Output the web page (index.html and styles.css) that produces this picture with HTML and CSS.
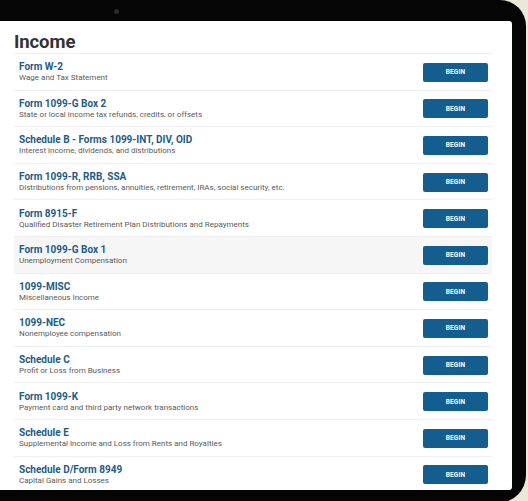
FILE: index.html
```html
<!DOCTYPE html>
<html>
<head>
<meta charset="utf-8">
<link rel="stylesheet" href="styles.css">
</head>
<body>
<div class="tablet">
  <div class="bezel-top"><span class="camera"></span></div>
  <div class="screen">
    <h1 class="heading">Income</h1>
    <ul class="list">
      <li class="row"><div class="text"><div class="title">Form W-2</div><div class="sub">Wage and Tax Statement</div></div><button class="begin">BEGIN</button></li>
      <li class="row"><div class="text"><div class="title">Form 1099-G Box 2</div><div class="sub">State or local income tax refunds, credits, or offsets</div></div><button class="begin">BEGIN</button></li>
      <li class="row"><div class="text"><div class="title">Schedule B - Forms 1099-INT, DIV, OID</div><div class="sub">Interest income, dividends, and distributions</div></div><button class="begin">BEGIN</button></li>
      <li class="row"><div class="text"><div class="title">Form 1099-R, RRB, SSA</div><div class="sub">Distributions from pensions, annuities, retirement, IRAs, social security, etc.</div></div><button class="begin">BEGIN</button></li>
      <li class="row"><div class="text"><div class="title">Form 8915-F</div><div class="sub">Qualified Disaster Retirement Plan Distributions and Repayments</div></div><button class="begin">BEGIN</button></li>
      <li class="row row-hover"><div class="text"><div class="title">Form 1099-G Box 1</div><div class="sub">Unemployment Compensation</div></div><button class="begin">BEGIN</button></li>
      <li class="row"><div class="text"><div class="title">1099-MISC</div><div class="sub">Miscellaneous Income</div></div><button class="begin">BEGIN</button></li>
      <li class="row"><div class="text"><div class="title">1099-NEC</div><div class="sub">Nonemployee compensation</div></div><button class="begin">BEGIN</button></li>
      <li class="row"><div class="text"><div class="title">Schedule C</div><div class="sub">Profit or Loss from Business</div></div><button class="begin">BEGIN</button></li>
      <li class="row"><div class="text"><div class="title">Form 1099-K</div><div class="sub">Payment card and third party network transactions</div></div><button class="begin">BEGIN</button></li>
      <li class="row"><div class="text"><div class="title">Schedule E</div><div class="sub">Supplemental Income and Loss from Rents and Royalties</div></div><button class="begin">BEGIN</button></li>
      <li class="row"><div class="text"><div class="title">Schedule D/Form 8949</div><div class="sub">Capital Gains and Losses</div></div><button class="begin">BEGIN</button></li>
    </ul>
  </div>
</div>
</body>
</html>
```

FILE: styles.css
```css
* { box-sizing: border-box; }
html, body { margin: 0; padding: 0; }
body {
  width: 528px;
  height: 501px;
  overflow: hidden;
  background: #ebe8d6;
  font-family: Roboto, "Liberation Sans", sans-serif;
}
.tablet {
  width: 546px;
  height: 503px;
  margin-left: -20px;
  background: #050505;
  border-radius: 0 26px 28px 0;
  padding: 0 14px 13px 20px;
  display: flex;
  flex-direction: column;
}
.bezel-top {
  height: 21px;
  flex: none;
  position: relative;
}
.camera {
  position: absolute;
  left: 114px;
  top: 9px;
  width: 5px;
  height: 5px;
  border-radius: 50%;
  background: #2a2a2a;
}
.screen {
  flex: 1;
  background: #fff;
  border-radius: 0 3px 3px 0;
  padding: 10px 20px 0 14px;
  overflow: hidden;
}
.heading {
  margin: 0;
  height: 22px;
  font-size: 18.5px;
  font-weight: 700;
  color: #333;
  line-height: 22px;
  letter-spacing: -0.1px;
}
.list {
  list-style: none;
  margin: 0;
  padding: 0;
}
.row {
  height: 36.6px;
  border-top: 1px solid #eeeeee;
  display: flex;
  align-items: center;
  justify-content: space-between;
  padding: 0 4px 0 5px;
}
.row-hover { background: #f6f6f6; }
.text { display: flex; flex-direction: column; padding-top: 1px; }
.title {
  font-size: 10px;
  font-weight: 700;
  color: #1d5b88;
  line-height: 12px;
}
.sub {
  font-size: 8px;
  color: #5a5a5a;
  line-height: 10px;
}
.begin {
  width: 65px;
  height: 19px;
  border: none;
  border-radius: 2px;
  background: #135d8f;
  color: #fff;
  font-family: Roboto, "Liberation Sans", sans-serif;
  font-size: 6.5px;
  font-weight: 700;
  letter-spacing: 0.2px;
  padding: 0;
  margin-top: 1px;
}
```
